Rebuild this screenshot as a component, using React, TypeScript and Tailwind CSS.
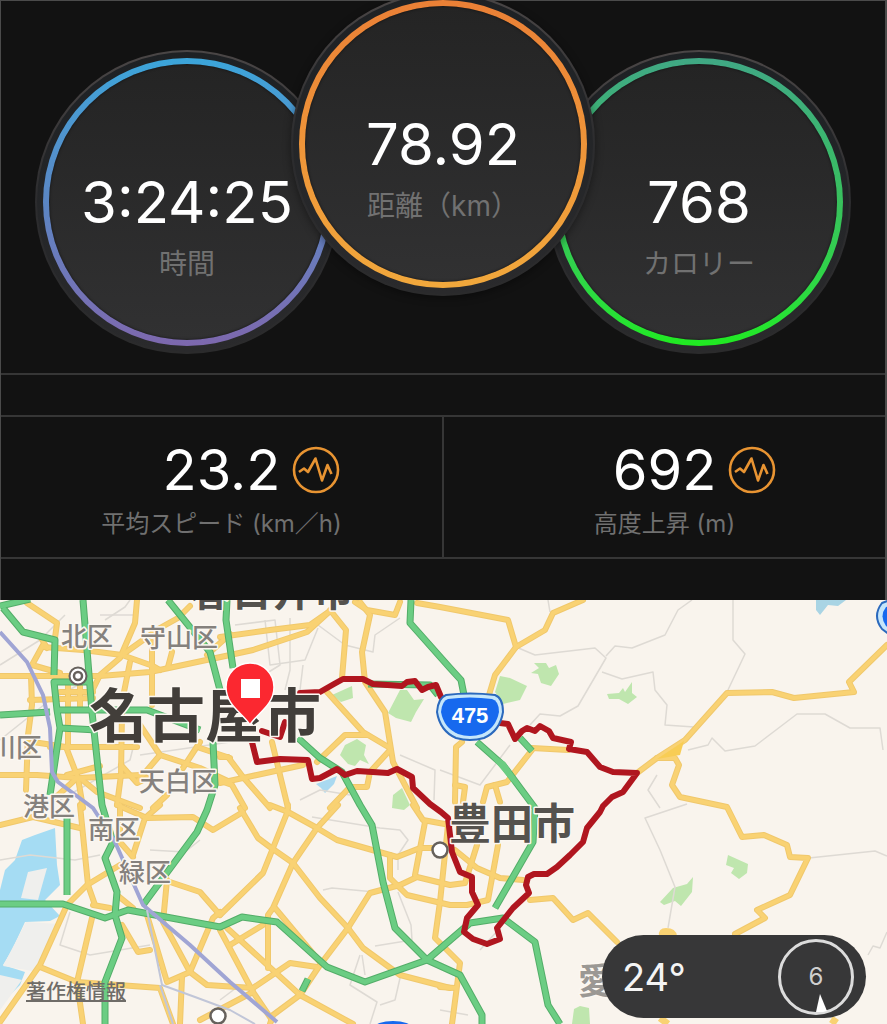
interface DialProps {
  value: string;
  label: string;
  ring: string;
  raised?: boolean;
}

interface MetricProps {
  value: string;
  label: string;
}

interface PlaceLabel {
  name: string;
  x: number;
  y: number;
  size: number;
  color: string;
  weight: number;
}

const YELLOW_ROADS = [
  "27,603 57,623 55,638",
  "137,600 135,623 120,658 100,675 90,695",
  "190,606 178,618 160,628 122,655",
  "0,676 100,676 150,672 230,655 253,650 307,632 330,611",
  "43,647 83,650 122,655 153,666 160,670",
  "43,645 32,665 60,673",
  "40,636 47,648",
  "31,676 32,705 28,735 26,790",
  "152,642 152,705",
  "172,652 168,667",
  "130,662 124,692",
  "68,685 68,748",
  "30,700 93,698",
  "60,692 93,692",
  "80,684 80,710",
  "50,747 137,747",
  "0,775 37,775 78,778 140,775",
  "33,742 66,747 78,778 83,808",
  "78,777 55,798",
  "67,775 100,766",
  "80,778 97,792 140,808",
  "122,712 121,775 117,805",
  "121,765 137,783 147,778",
  "140,725 160,755 200,768 230,782",
  "160,755 137,782",
  "200,742 183,768",
  "200,748 230,758",
  "167,795 153,808",
  "207,655 230,634",
  "220,637 270,630 310,625 330,611",
  "330,610 346,630 342,678",
  "360,602 370,615 362,652 365,682 385,712 393,762 417,808",
  "355,602 367,610 395,615 400,602",
  "417,603 440,607 508,620 516,647",
  "583,600 553,613 545,630 516,647 495,675 489,695",
  "327,692 363,732 390,748",
  "317,762 345,735 367,735",
  "390,750 370,772 367,787 350,787 330,808",
  "220,757 228,757 243,777 270,808",
  "220,783 303,765",
  "272,742 288,808",
  "218,780 232,785 245,808",
  "462,742 456,747 455,802",
  "455,785 465,787 463,802",
  "532,748 568,750",
  "532,750 507,782 487,787 483,802",
  "495,785 500,802",
  "637,773 657,758 685,740 727,693 772,692 794,698 854,692 849,682 887,645",
  "657,758 675,758 679,765 672,785 680,797 727,807 742,837 764,835 787,845 790,857 808,858 790,895 757,910 765,918 735,934",
  "0,825 33,817 80,828",
  "80,805 88,885 95,905",
  "117,805 147,818 193,817 213,830 243,812",
  "160,805 145,818 133,855",
  "120,805 120,842 133,857",
  "120,865 87,885 67,905 40,965 0,1022",
  "92,918 77,982 83,1024",
  "40,967 77,982 160,988 173,1024",
  "93,905 110,908",
  "117,895 133,908",
  "122,925 138,952 150,950",
  "147,915 167,982 190,972 207,985 253,988 290,963 317,967",
  "167,880 163,922 190,972",
  "170,882 200,892 220,915",
  "220,912 213,918 190,972",
  "182,977 180,1024",
  "200,1020 253,992",
  "240,808 258,838 270,847 293,863 320,898 348,928 363,948 400,975 450,988",
  "270,805 288,812 317,828 337,840 397,857 420,848 440,848",
  "288,805 287,813 263,873 220,915",
  "338,805 317,828 293,863 273,908 268,915 268,968",
  "275,908 320,962",
  "348,928 320,965 300,995 273,1015 270,1024",
  "348,928 370,893 400,885 417,877 450,885 465,883 477,845",
  "390,855 390,878 407,895 450,905 467,905 488,900 498,845",
  "413,805 423,820 450,825",
  "425,822 415,875",
  "448,825 440,902 435,938 460,963 452,1024",
  "220,930 253,992 272,1020",
  "227,928 300,995 353,1024",
  "230,945 263,925",
  "455,850 477,868 500,878 523,880",
  "530,900 553,898 573,920 588,913 617,942",
  "440,987 455,988",
];

const GREEN_ROADS = [
  "0,606 30,599",
  "3,608 23,632 55,640 54,675",
  "83,600 92,712 102,805 113,842 105,858 117,892 115,915 122,938 105,982 105,1024",
  "88,682 54,682 57,710 60,728 50,795",
  "67,818 67,895",
  "0,715 50,712",
  "57,710 147,710 200,730",
  "60,728 97,730",
  "168,600 210,652 220,690",
  "213,742 215,785 207,810 197,832 143,905",
  "227,600 226,620 233,668",
  "298,738 320,758 342,772 360,805 372,825 383,882 395,928 427,960 460,975 482,1015 482,1024",
  "0,904 63,904 105,918 128,910 220,927 242,917 277,922 327,967 365,982 427,960 470,923 503,918 535,942 548,1005 560,1024",
  "411,600 410,623 450,668 461,680 464,695",
  "477,742 503,765 535,808 533,842 495,908",
  "520,738 532,751",
  "308,979 302,991",
  "368,684 430,685 438,695",
];

const MINOR_ROADS = [
  "100,615 135,615",
  "105,620 125,607 130,600",
  "0,665 40,640 65,615",
  "0,740 50,700 110,668",
  "140,755 230,742",
  "60,800 130,760 135,740",
  "235,625 275,620 280,665 240,690",
  "265,620 270,665 305,660 318,628",
  "290,618 290,670 285,690",
  "318,625 345,645 373,652 375,635 400,618",
  "303,665 300,690",
  "516,647 535,655 595,648 606,658 578,706 560,716 540,714 530,725",
  "548,600 550,612",
  "606,656 615,646 632,648 665,635 678,610 692,600",
  "602,672 622,679 653,672 655,690 667,705 665,725 694,727",
  "733,600 733,640 745,654 727,692",
  "688,750 708,745 712,738 725,751 755,746 797,714 825,714 850,728 880,728 883,750",
  "657,775 648,790 660,808",
  "440,770 480,785 510,745",
  "400,755 435,770 434,800",
  "300,800 320,790 350,795",
  "687,804 645,818 660,850 675,887 668,928",
  "809,858 875,851 887,856",
  "868,955 873,946 880,948 887,932",
  "312,817 380,828 400,830 408,840 398,855 398,870",
  "323,890 332,888 375,892",
  "398,892 411,925 412,940 375,946",
  "360,955 350,985 377,1002 370,1024",
  "362,955 365,975",
  "403,965 395,1000 380,1005",
  "0,860 30,855 75,860 100,855",
  "70,912 60,945 90,955 150,945",
  "150,850 185,852 200,840",
  "240,985 220,1000",
  "480,950 500,928",
  "440,1010 468,1015",
];

const PARKS = [
  "332,695 352,686 353,698 341,702",
  "388,713 400,690 407,690 414,700 424,699 416,712 411,722 396,718",
  "340,755 345,745 357,739 366,745 364,755 369,764 360,760 355,766 348,764",
  "393,795 402,788 410,805 404,810 392,808",
  "500,676 510,678 527,686 520,700 503,704 495,692",
  "531,673 539,668 534,663 546,663 549,668 556,665 559,674 551,686 541,683 538,674",
  "607,694 619,693 623,688 625,692 632,682 632,693 637,697 628,704 619,699 609,699",
  "660,902 673,888 687,884 693,877 692,892 681,906 675,901 664,905",
  "728,855 748,864 747,873 739,879 731,873 734,868 726,865",
  "574,1009 580,1006 589,1008 590,1024 572,1024",
];

const ROUTE =
  "M300 693 L320 692 L334 684 L343 679 L363 679 L373 684 L402 686 L407 682 L415 681 L422 690 L428 687 L436 685 L441 697 M500 723 L508 724 L515 739 L522 731 L527 728 L535 731 L540 726 L549 731 L553 738 L571 742 L569 749 L587 752 L600 767 L613 772 L637 773 L623 792 L612 797 L603 806 L600 812 L587 828 L583 842 L570 855 L557 867 L547 874 L534 874 L528 877 L526 885 L529 893 L513 908 L497 928 L500 939 L487 944 L473 939 L464 932 L467 918 L478 905 L472 892 L472 877 L460 872 L452 852 L448 818 L441 812 L430 804 L413 788 L412 777 L397 769 L388 773 L357 771 L345 775 L337 769 L320 778 L312 779 L308 760 L280 759 L257 762 L252 742 M262 731 L280 737 L285 722";

const LABELS: PlaceLabel[] = [
  { name: "春日井市", x: 190, y: 606, size: 41, color: "#55524e", weight: 700 },
  { name: "北区", x: 61, y: 646, size: 26, color: "#85817d", weight: 500 },
  { name: "守山区", x: 140, y: 647, size: 26, color: "#85817d", weight: 500 },
  { name: "川区", x: -10, y: 757, size: 26, color: "#85817d", weight: 500 },
  { name: "天白区", x: 139, y: 791, size: 26, color: "#85817d", weight: 500 },
  { name: "港区", x: 23, y: 816, size: 26, color: "#85817d", weight: 500 },
  { name: "南区", x: 88, y: 839, size: 26, color: "#85817d", weight: 500 },
  { name: "緑区", x: 119, y: 882, size: 26, color: "#85817d", weight: 500 },
  { name: "名古屋市", x: 89, y: 737, size: 58, color: "#423e3a", weight: 700 },
  { name: "豊田市", x: 449, y: 839, size: 42, color: "#55524e", weight: 700 },
  { name: "愛", x: 578, y: 994, size: 36, color: "#9b9894", weight: 700 },
];

function Dial({ value, label, ring, raised }: DialProps) {
  return (
    <div
      className={`size-[304px] shrink-0 rounded-full bg-linear-to-b from-[#4a4646] via-[#2c2c2e] to-[#2b2b2c] p-0.5 ${
        raised ? "relative z-10 -mx-12 -mt-[9px] shadow-[0_2px_8px_#00000066]" : "mt-[49px]"
      }`}
    >
      <div className="size-full rounded-full bg-linear-to-b from-[#1e2124] to-[#2a2a2c] p-1.5">
        <div className={`size-full rounded-full p-1.5 ${ring}`}>
          <div className="flex size-full flex-col items-center rounded-full bg-linear-to-b from-[#242424] to-[#313132] pt-[102px] shadow-[inset_0_0_3px_#00000099]">
            <span className="text-[58px] leading-[72px] text-white">{value}</span>
            <span className="mt-2 text-[28px] leading-9 text-[#717171]">{label}</span>
          </div>
        </div>
      </div>
    </div>
  );
}

function GraphIcon() {
  return (
    <svg viewBox="0 0 48 48" className="size-12" fill="none" stroke="#e89432">
      <circle cx="24" cy="24" r="22" strokeWidth="2.6" />
      <path
        d="M7 26 L12 22.5 L16 26 L23.5 12.5 L30 34.5 L35.5 19 L39.5 28"
        strokeWidth="2.6"
        strokeLinejoin="round"
      />
    </svg>
  );
}

function Metric({ value, label }: MetricProps) {
  return (
    <div className="flex-1 pt-[17px] pb-[15px]">
      <div className="grid grid-cols-[1fr_auto_1fr] items-center">
        <span className="col-start-2 text-[56px] leading-[72px] text-white">{value}</span>
        <button type="button" aria-label={label} className="ml-3 justify-self-start">
          <GraphIcon />
        </button>
      </div>
      <p className="text-center text-[24px] leading-9 text-[#707070]">{label}</p>
    </div>
  );
}

function RouteMap() {
  return (
    <svg
      viewBox="0 600 887 424"
      className="block w-full"
      fill="none"
      strokeLinejoin="round"
      fontFamily='"Noto Sans CJK JP", sans-serif'
    >
      <rect y="600" width="887" height="424" fill="#f9f4ed" />

      {/* harbour */}
      <path
        d="M22 840 L35 835 L55 828 L57 865 L60 885 L45 900 L60 916 L50 921 L25 922 L12 950 L3 965 L25 972 L20 985 L0 1005 V890 L5 870 L15 860 Z"
        fill="#a5dcf3"
      />
      <path d="M28 872 L47 868 L38 900 L21 898 Z M26 922 L60 924 L38 972 L3 966 Z M0 975 L22 980 L0 1010 Z" fill="#efefed" />
      <path d="M316 784 L337 776 L334 784 L325 793 L321 788 Z" fill="#a9d9f0" />
      <path d="M816 600 H846 L838 606 L828 605 L820 615 L816 610 Z" fill="#a9d4e4" />

      {PARKS.map((points) => (
        <polygon key={points} points={points} fill="#bfe6ae" />
      ))}
      {MINOR_ROADS.map((points) => (
        <polyline key={points} points={points} stroke="#dedad4" strokeWidth="1.5" />
      ))}
      {YELLOW_ROADS.map((points) => (
        <polyline key={points} points={points} stroke="#f0c86c" strokeWidth="6" strokeLinecap="round" />
      ))}
      {YELLOW_ROADS.map((points) => (
        <polyline key={points} points={points} stroke="#f9d273" strokeWidth="4" strokeLinecap="round" />
      ))}
      <path d="M657 759 L684 741 L680 755 Z" fill="#f8cd55" />
      <path d="M659 936 Q658 928 666 928 Q676 928 677 936 Z" fill="#f9d273" />
      <path d="M660 1018 L668 1024 M836 1018 L832 1024" stroke="#f9d273" strokeWidth="7" />

      {GREEN_ROADS.map((points) => (
        <polyline key={points} points={points} stroke="#53ad68" strokeWidth="7" />
      ))}
      {GREEN_ROADS.map((points) => (
        <polyline key={points} points={points} stroke="#6bcd83" strokeWidth="5" />
      ))}
      <path d="M485 750 L505 762 L524 790 L512 782 Z" fill="#6bcd83" />

      {/* railway */}
      <polyline
        points="0,632 27,662 43,695 50,728 52,772 58,782 93,808 115,842 143,905 190,945 230,982 277,1022"
        stroke="#a0a5d4"
        strokeWidth="4"
      />
      <path d="M147 910 L162 985 L195 997 L230 1010 L255 1024 M160 985 L173 1024" stroke="#c1c6d8" strokeWidth="2" />

      <path d={ROUTE} stroke="#b0161f" strokeWidth="6" strokeLinecap="round" />

      <circle cx="440" cy="850" r="7.5" fill="#fff" stroke="#66615c" strokeWidth="2.5" />
      <circle cx="218" cy="1016" r="7.5" fill="#fff" stroke="#66615c" strokeWidth="2.5" />
      <circle cx="78" cy="676" r="8.5" fill="#fff" stroke="#66615c" strokeWidth="2" />
      <circle cx="78" cy="676" r="4" fill="#fff" stroke="#66615c" strokeWidth="2.5" />

      {LABELS.map((label) => (
        <text
          key={label.name}
          x={label.x}
          y={label.y}
          fontSize={label.size}
          fontWeight={label.weight}
          fill={label.color}
          stroke="#fbf7f1"
          strokeWidth="3"
          paintOrder="stroke"
        >
          {label.name}
        </text>
      ))}

      {/* route 475 shield */}
      <path
        d="M446 695 Q470 692 495 695 Q503 698 503 712 Q500 731 484 738 Q470 742 456 738 Q440 731 437 712 Q438 698 446 695 Z"
        fill="#c5e6fb"
        stroke="#2b69bd"
        strokeWidth="2"
      />
      <path
        d="M448 699 Q470 696 492 699 Q499 701 499 712 Q496 728 482 734 Q470 738 458 734 Q444 728 441 712 Q442 701 448 699 Z"
        fill="#1769ee"
      />
      <text
        x="470"
        y="723"
        fontSize="22"
        fontWeight="700"
        fontFamily='"Liberation Sans", sans-serif'
        textAnchor="middle"
        fill="#fff"
      >
        475
      </text>
      <path d="M890 600 L882 603 Q872 616 882 629 L890 635 Z" fill="#c5e6fb" stroke="#2b69bd" strokeWidth="2" />
      <path d="M890 606 L886 607 Q879 616 886 626 L890 629 Z" fill="#1769ee" />
      <ellipse cx="393" cy="1028" rx="19" ry="7" fill="#1769ee" />

      {/* finish pin */}
      <path
        d="M250 725 C244 714 226 706 226 687 A24 24 0 0 1 274 687 C274 706 256 714 250 725 Z"
        fill="#fb2830"
        stroke="#fff"
        strokeWidth="1.5"
      />
      <rect x="241" y="679" width="19" height="19" fill="#fff" />
    </svg>
  );
}

function WeatherBadge() {
  return (
    <div className="absolute right-[21px] bottom-1.5 flex h-[83px] w-[264px] items-center justify-between rounded-full bg-[#373738] pr-3 pl-5">
      <span className="text-[38px] leading-10 text-[#f4f4f4]">24°</span>
      <div className="relative flex size-[76px] items-center justify-center rounded-full border-[3px] border-[#dcdcdc]">
        <span className="text-[24px] leading-8 text-[#cfcfcf]">6</span>
        <svg viewBox="0 0 12 18" className="absolute bottom-0 left-[34px] h-[18px] w-3" fill="#fff">
          <path d="M5 0 L12 17 Q6 19 1 18 Z" />
        </svg>
      </div>
    </div>
  );
}

export default function App() {
  return (
    <main className="w-full overflow-hidden bg-[#121212] font-['Inter','Noto_Sans_CJK_JP',sans-serif]">
      <section className="border-t border-r-2 border-l border-[#4b4b4b]">
        <div className="flex items-start justify-center pb-[19px]">
          <Dial
            value="3:24:25"
            label="時間"
            ring="bg-linear-to-b from-[#3ba5da] via-[#5a86c4] to-[#7d68ae]"
          />
          <Dial
            value="78.92"
            label="距離（km）"
            ring="bg-linear-to-b from-[#ea8036] to-[#f1a83c]"
            raised
          />
          <Dial
            value="768"
            label="カロリー"
            ring="bg-linear-to-b from-[#40a884] via-[#38c05c] to-[#20ea20]"
          />
        </div>
        <div className="h-11 border-y-2 border-[#363636]" />
        <div className="flex divide-x-2 divide-[#363636]">
          <Metric value="23.2" label="平均スピード (km／h)" />
          <Metric value="692" label="高度上昇 (m)" />
        </div>
        <div className="h-[43px] border-t-2 border-[#363636]" />
      </section>

      <section className="relative">
        <RouteMap />
        <a
          href="#legal"
          className="absolute bottom-4 left-[26px] text-[20px] leading-8 font-medium text-[#6f6c68] underline"
        >
          著作権情報
        </a>
        <WeatherBadge />
      </section>
    </main>
  );
}
